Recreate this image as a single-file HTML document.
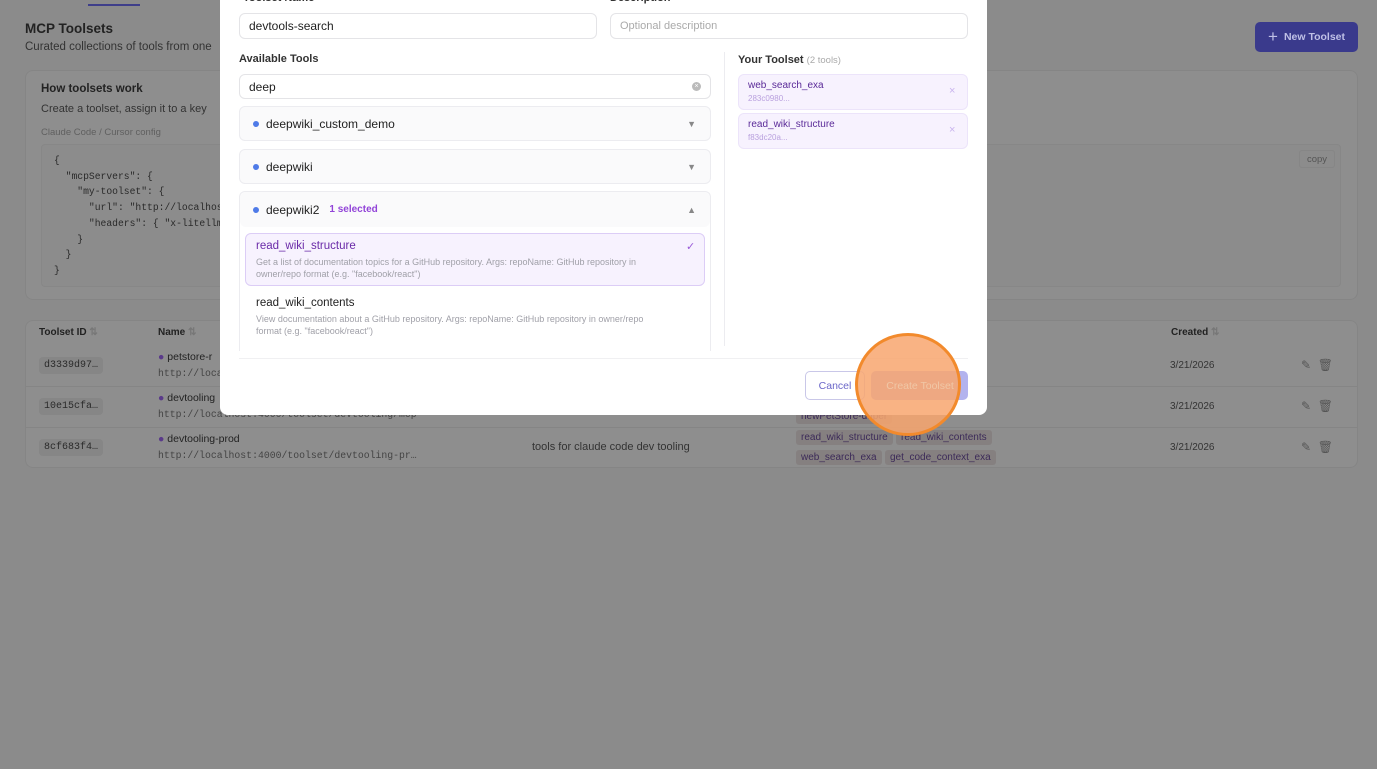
<!DOCTYPE html>
<html><head><meta charset="utf-8"><style>
*{box-sizing:border-box;margin:0;padding:0}
html,body{background:#8b8b8b}
body{width:1377px;height:769px;overflow:hidden;font-family:"Liberation Sans",sans-serif;position:relative;color:#1f1f1f}
.a{position:absolute}
.mono{font-family:"Liberation Mono",monospace}
.bg{color:#222}
.card{background:#8e8e8e;border:1px solid #858585;border-radius:8px}
.modal{left:220px;top:-10px;width:767px;height:425px;background:#fff;border-radius:0 0 8px 8px}
.inp{border:1px solid #e4e4e7;border-radius:6px;background:#fff;font-size:12px;padding:0 9px;display:flex;align-items:center}
.grp{border:1px solid #ececf0;border-radius:6px;background:#fafafb;display:flex;align-items:center;padding-left:13px;font-size:12px;color:#222}
.dot{width:6px;height:6px;border-radius:50%;background:#4f7be8;margin-right:7px}
.caret{position:absolute;right:14px;font-size:9px;color:#888}
.chip{border:1px solid #ece4fa;background:#f7f2fe;border-radius:6px}
.tag{background:#858080;color:#3c2a58;font-size:10px;padding:2px 5px;border-radius:3px;position:absolute}
.pid{background:#868686;border-radius:4px;font-size:10px;color:#2a2a2a;padding:3px 5px;position:absolute}
</style></head><body>
<div class="a" style="left:88px;top:4px;width:52px;height:2px;background:#3e3e8a"></div>
<div class="a bg" style="left:25px;top:21px;font-size:13.5px;font-weight:bold">MCP Toolsets</div>
<div class="a" style="left:25px;top:41px;font-size:11.5px;color:#333">Curated collections of tools from one</div>
<div class="a" style="left:1255px;top:22px;width:103px;height:30px;background:#3a3a8c;border-radius:5px;color:#bfc0e6;font-size:10.5px;font-weight:bold;display:flex;align-items:center;justify-content:center"><span style="font-size:17px;font-weight:normal;margin-right:6px">+</span>New Toolset</div>
<div class="a card" style="left:25px;top:70px;width:1333px;height:230px"></div>
<div class="a bg" style="left:41px;top:83px;font-size:11.5px;font-weight:bold">How toolsets work</div>
<div class="a" style="left:41px;top:103px;font-size:11px;color:#333">Create a toolset, assign it to a key</div>
<div class="a" style="left:41px;top:127px;font-size:9.5px;color:#606060">Claude Code / Cursor config</div>
<div class="a" style="left:41px;top:144px;width:1300px;height:143px;background:#8c8c8c;border:1px solid #878787;border-radius:4px"></div>
<pre class="a mono" style="left:54px;top:153px;font-size:9.7px;line-height:15.7px;color:#2a2a2a">{
  "mcpServers": {
    "my-toolset": {
      "url": "http://localhost
      "headers": { "x-litellm
    }
  }
}</pre>
<div class="a" style="left:1299px;top:150px;width:36px;height:18px;border:1px solid #868686;border-radius:3px;font-size:9.5px;color:#555;display:flex;align-items:center;justify-content:center">copy</div>
<div class="a card" style="left:25px;top:320px;width:1333px;height:148px"></div>
<div class="a" style="left:25px;top:386px;width:1333px;height:1px;background:#858585"></div>
<div class="a" style="left:25px;top:427px;width:1333px;height:1px;background:#858585"></div>
<div class="a bg" style="left:39px;top:327px;font-size:10px;font-weight:bold">Toolset ID <span style="color:#777">⇅</span></div>
<div class="a bg" style="left:158px;top:327px;font-size:10px;font-weight:bold">Name <span style="color:#777">⇅</span></div>
<div class="a bg" style="left:1171px;top:327px;font-size:10px;font-weight:bold">Created <span style="color:#777">⇅</span></div>
<div class="pid mono" style="left:39px;top:357px">d3339d97…</div>
<div class="pid mono" style="left:39px;top:398px">10e15cfa…</div>
<div class="pid mono" style="left:39px;top:439px">8cf683f4…</div>
<div class="a" style="left:158px;top:351px;font-size:10.5px;color:#222"><span style="color:#5a3a8a">●</span> petstore-r</div>
<div class="a mono" style="left:158px;top:368px;font-size:9.8px;color:#444">http://local</div>
<div class="a" style="left:158px;top:392px;font-size:10.5px;color:#222"><span style="color:#5a3a8a">●</span> devtooling</div>
<div class="a mono" style="left:158px;top:409px;font-size:9.8px;color:#444">http://localhost:4000/toolset/devtooling/mcp</div>
<div class="a" style="left:158px;top:433px;font-size:10.5px;color:#222"><span style="color:#5a3a8a">●</span> devtooling-prod</div>
<div class="a mono" style="left:158px;top:450px;font-size:9.8px;color:#444">http://localhost:4000/toolset/devtooling-pr…</div>
<div class="a" style="left:532px;top:441px;font-size:11px;color:#333">tools for claude code dev tooling</div>
<div class="tag" style="left:796px;top:409px">newPetStore-duper</div>
<div class="tag" style="left:796px;top:430px">read_wiki_structure</div>
<div class="tag" style="left:896px;top:430px">read_wiki_contents</div>
<div class="tag" style="left:796px;top:450px">web_search_exa</div>
<div class="tag" style="left:885px;top:450px">get_code_context_exa</div>
<div class="a" style="left:1170px;top:360px;font-size:10px;color:#333">3/21/2026</div>
<div class="a" style="left:1170px;top:401px;font-size:10px;color:#333">3/21/2026</div>
<div class="a" style="left:1170px;top:442px;font-size:10px;color:#333">3/21/2026</div>
<div class="a" style="left:1301px;top:358px;font-size:12px;color:#555">✎&nbsp;&nbsp;🗑</div>
<div class="a" style="left:1301px;top:399px;font-size:12px;color:#555">✎&nbsp;&nbsp;🗑</div>
<div class="a" style="left:1301px;top:440px;font-size:12px;color:#555">✎&nbsp;&nbsp;🗑</div>

<div class="a modal"></div>
<div class="a" style="left:243px;top:-8px;font-size:11px;font-weight:bold;color:#333">Toolset Name</div>
<div class="a" style="left:610px;top:-8px;font-size:11px;font-weight:bold;color:#333">Description</div>
<div class="a inp" style="left:239px;top:13px;width:358px;height:26px">devtools-search</div>
<div class="a inp" style="left:610px;top:13px;width:358px;height:26px;color:#aaa;font-size:11px">Optional description</div>
<div class="a" style="left:239px;top:53px;font-size:11px;font-weight:bold;color:#333">Available Tools</div>
<div class="a inp" style="left:239px;top:74px;width:472px;height:25px">deep<span style="position:absolute;right:9px;width:9px;height:9px;border-radius:50%;background:#bbb;color:#fff;font-size:7px;line-height:9px;text-align:center">×</span></div>
<div class="a grp" style="left:239px;top:106px;width:472px;height:35px"><span class="dot"></span>deepwiki_custom_demo<span class="caret">▼</span></div>
<div class="a grp" style="left:239px;top:149px;width:472px;height:35px"><span class="dot"></span>deepwiki<span class="caret">▼</span></div>
<div class="a" style="left:239px;top:191px;width:472px;height:160px;border:1px solid #ececf0;border-bottom:none;border-radius:6px 6px 0 0;background:#fff"></div>
<div class="a grp" style="left:240px;top:192px;width:470px;height:35px;border:none"><span class="dot"></span>deepwiki2<span style="color:#9244d8;font-weight:bold;font-size:10px;margin-left:10px">1 selected</span><span class="caret">▲</span></div>
<div class="a" style="left:245px;top:233px;width:460px;height:53px;background:#f7f2fe;border:1px solid #dccdf6;border-radius:6px"></div>
<div class="a" style="left:256px;top:240px;font-size:11.5px;color:#6a2aa8">read_wiki_structure</div>
<div class="a" style="left:686px;top:240px;font-size:11px;color:#9a5ad8">✓</div>
<div class="a" style="left:256px;top:256px;font-size:9px;line-height:12px;color:#a0a0a8;width:420px">Get a list of documentation topics for a GitHub repository. Args: repoName: GitHub repository in owner/repo format (e.g. "facebook/react")</div>
<div class="a" style="left:256px;top:297px;font-size:11.5px;color:#222">read_wiki_contents</div>
<div class="a" style="left:256px;top:313px;font-size:9px;line-height:12px;color:#a0a0a8;width:395px">View documentation about a GitHub repository. Args: repoName: GitHub repository in owner/repo format (e.g. "facebook/react")</div>
<div class="a" style="left:724px;top:52px;width:1px;height:294px;background:#ececf0"></div>
<div class="a" style="left:738px;top:54px;font-size:11px;font-weight:bold;color:#333">Your Toolset <span style="font-weight:normal;color:#aaa;font-size:9.5px">(2 tools)</span></div>
<div class="a chip" style="left:738px;top:74px;width:230px;height:36px"></div>
<div class="a" style="left:748px;top:80px;font-size:10px;color:#5a2a98">web_search_exa</div>
<div class="a" style="left:748px;top:94px;font-size:8px;color:#b9a0de">283c0980...</div>
<div class="a" style="left:949px;top:85px;font-size:11px;color:#c9b4ee">×</div>
<div class="a chip" style="left:738px;top:113px;width:230px;height:36px"></div>
<div class="a" style="left:748px;top:119px;font-size:10px;color:#5a2a98">read_wiki_structure</div>
<div class="a" style="left:748px;top:133px;font-size:8px;color:#b9a0de">f83dc20a...</div>
<div class="a" style="left:949px;top:124px;font-size:11px;color:#c9b4ee">×</div>
<div class="a" style="left:239px;top:358px;width:729px;height:1px;background:#f0f0f2"></div>
<div class="a" style="left:805px;top:371px;width:60px;height:29px;border:1px solid #c9c7e8;border-radius:5px;font-size:10.5px;color:#6a66c8;display:flex;align-items:center;justify-content:center">Cancel</div>
<div class="a" style="left:871px;top:371px;width:97px;height:29px;background:#b3b3ee;border-radius:5px"></div>
<div class="a" style="left:855px;top:333px;width:106px;height:103px;border-radius:50%;background:rgba(248,166,110,.85);border:3px solid #f28a2c"></div>
<div class="a" style="left:872px;top:371px;width:96px;height:29px;font-size:10.5px;color:#f0c7a6;display:flex;align-items:center;justify-content:center">Create Toolset</div>
</body></html>
